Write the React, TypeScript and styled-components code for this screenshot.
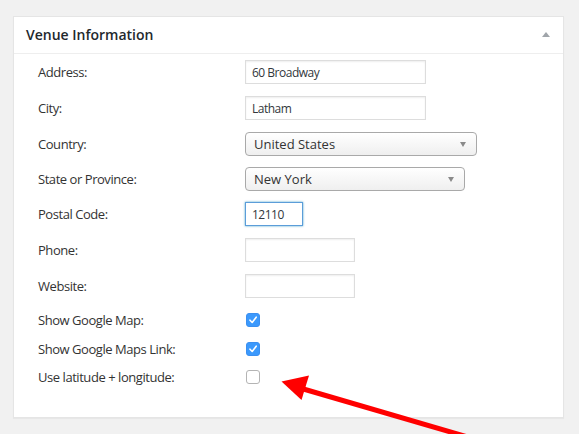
import React from "react";
import styled, { createGlobalStyle } from "styled-components";

const Global = createGlobalStyle`
  html, body { margin: 0; padding: 0; background: #f1f1f1; }
  body { font-family: "Open Sans", "Noto Sans", sans-serif; color: #333; }
`;

const Page = styled.div`
  position: relative;
  width: 579px;
  height: 434px;
  overflow: hidden;
  padding: 16px 0 0 13px;
  box-sizing: border-box;
`;

const Panel = styled.section`
  width: 551px;
  background: #fff;
  border: 1px solid #e5e5e5;
  box-shadow: 0 1px 1px rgba(0, 0, 0, 0.04);
  box-sizing: border-box;
`;

const Header = styled.header`
  height: 36px;
  display: flex;
  align-items: center;
  justify-content: space-between;
  padding: 0 13px 0 12px;
  border-bottom: 1px solid #eee;
`;

const Title = styled.h2`
  margin: 0;
  font-size: 14px;
  font-weight: 600;
  color: #23282d;
  line-height: 1;
`;

const Toggle = styled.span`
  width: 0;
  height: 0;
  border-left: 4px solid transparent;
  border-right: 4px solid transparent;
  border-bottom: 5px solid #a0a5aa;
  margin-top: -1px;
`;

const Body = styled.div`
  padding: 0 0 25px 24px;
`;

const Row = styled.div<{ $h: number }>`
  display: grid;
  grid-template-columns: 207px 1fr;
  align-items: center;
  height: ${(p) => p.$h}px;
`;

const Label = styled.label`
  font-size: 13px;
  letter-spacing: -0.45px;
  color: #333;
  line-height: 18px;
  margin-top: -1px;
`;

const TextInput = styled.div<{ $w: number; $focus?: boolean }>`
  width: ${(p) => p.$w}px;
  height: 24px;
  box-sizing: border-box;
  border: 1px solid ${(p) => (p.$focus ? "#5b9dd9" : "#ddd")};
  box-shadow: ${(p) =>
    p.$focus ? "0 0 2px rgba(30,140,190,0.8)" : "inset 0 1px 2px rgba(0,0,0,0.07)"};
  background: #fff;
  padding: 0 6px;
  display: flex;
  align-items: center;
  font-size: 12px;
  letter-spacing: -0.5px;
  color: #32373c;
`;

const Select = styled.div<{ $w: number }>`
  width: ${(p) => p.$w}px;
  height: 24px;
  box-sizing: border-box;
  border: 1px solid #a9a9a9;
  border-radius: 4px;
  background: linear-gradient(#ffffff, #efefef);
  display: flex;
  align-items: center;
  justify-content: space-between;
  padding: 0 10px 0 8px;
  font-size: 13px;
  color: #333;
`;

const Caret = styled.span`
  width: 0;
  height: 0;
  border-left: 3.5px solid transparent;
  border-right: 3.5px solid transparent;
  border-top: 5px solid #8a8a8a;
`;

const Check = styled.span<{ $on: boolean }>`
  width: 14px;
  height: 14px;
  box-sizing: border-box;
  border-radius: 3px;
  border: 1px solid ${(p) => (p.$on ? "#3b8ff0" : "#b4b4b4")};
  background: ${(p) => (p.$on ? "#3b99fc" : "#fff")};
  display: flex;
  align-items: center;
  justify-content: center;
  margin-left: 1px;
`;

const Overlay = styled.svg`
  position: absolute;
  left: 0;
  top: 0;
  pointer-events: none;
`;

const CheckMark = () => (
  <svg width="10" height="10" viewBox="0 0 10 10">
    <path d="M2 5.2 L4.2 7.5 L8.2 2.2" fill="none" stroke="#fff" strokeWidth="1.6" strokeLinecap="round" strokeLinejoin="round" />
  </svg>
);

export default function App() {
  return (
    <>
      <Global />
      <Page>
        <Panel>
          <Header>
            <Title>Venue Information</Title>
            <Toggle />
          </Header>
          <Body>
            <Row $h={36}>
              <Label>Address:</Label>
              <TextInput $w={181}>60 Broadway</TextInput>
            </Row>
            <Row $h={36}>
              <Label>City:</Label>
              <TextInput $w={181}>Latham</TextInput>
            </Row>
            <Row $h={36}>
              <Label>Country:</Label>
              <Select $w={232}>
                <span>United States</span>
                <Caret />
              </Select>
            </Row>
            <Row $h={34}>
              <Label>State or Province:</Label>
              <Select $w={220}>
                <span>New York</span>
                <Caret />
              </Select>
            </Row>
            <Row $h={36}>
              <Label>Postal Code:</Label>
              <TextInput $w={58} $focus>12110</TextInput>
            </Row>
            <Row $h={36}>
              <Label>Phone:</Label>
              <TextInput $w={110} />
            </Row>
            <Row $h={36}>
              <Label>Website:</Label>
              <TextInput $w={110} />
            </Row>
            <Row $h={32}>
              <Label>Show Google Map:</Label>
              <Check $on>
                <CheckMark />
              </Check>
            </Row>
            <Row $h={26}>
              <Label>Show Google Maps Link:</Label>
              <Check $on>
                <CheckMark />
              </Check>
            </Row>
            <Row $h={30}>
              <Label>Use latitude + longitude:</Label>
              <Check $on={false} />
            </Row>
          </Body>
        </Panel>
        <Overlay width="579" height="434" viewBox="0 0 579 434">
          <line x1="300" y1="388" x2="478" y2="440" stroke="#f00" strokeWidth="5" />
          <polygon points="281.5,381.5 309,375.5 301.5,400" fill="#f00" />
        </Overlay>
      </Page>
    </>
  );
}
